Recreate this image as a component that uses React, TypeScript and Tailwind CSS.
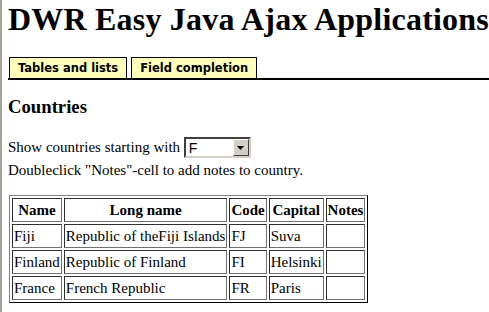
import React from "react";

const rows = [
  ["Fiji", "Republic of theFiji Islands", "FJ", "Suva"],
  ["Finland", "Republic of Finland", "FI", "Helsinki"],
  ["France", "French Republic", "FR", "Paris"],
];

const td = "border border-t-[#303030] border-l-[#303030] border-r-[#707070] border-b-[#707070] px-[1px] py-[1px] text-left font-normal";
const th = "border border-t-[#303030] border-l-[#303030] border-r-[#707070] border-b-[#707070] px-[1px] py-[1px] text-center font-bold";

export default function App() {
  return (
    <div className="flex min-h-[312px] w-[489px] bg-white text-black" style={{ fontFamily: '"Liberation Serif", serif' }}>
      <div className="w-[2px] shrink-0 bg-[#a8a49c]" />
      <div className="flex-1 pl-[6px]">
        <h1 className="mt-[1px] text-[32px] font-bold leading-[37px] tracking-[0.2px] whitespace-nowrap">DWR Easy Java Ajax Applications</h1>
        <div className="mt-[19px] flex gap-[4px] border-b-2 border-black pl-[1px]">
          <div className="border border-black border-b-0 bg-[#ffffbb] px-[8px] pt-[2px] pb-[2px] text-[11.5px] font-bold leading-[16px]" style={{ fontFamily: '"DejaVu Sans", Verdana, sans-serif' }}>Tables and lists</div>
          <div className="border border-black border-b-0 bg-[#ffffbb] px-[8px] pt-[2px] pb-[2px] text-[11.5px] font-bold leading-[16px]" style={{ fontFamily: '"DejaVu Sans", Verdana, sans-serif' }}>Field completion</div>
        </div>
        <h3 className="mt-[16px] text-[18.7px] font-bold leading-[22px]">Countries</h3>
        <div className="mt-[19px] flex items-center text-[15px] leading-[19px]">
          <span>Show countries starting with&nbsp;</span>
          <div className="flex h-[21px] w-[67px] items-center border-2 border-t-[#404040] border-l-[#404040] border-r-[#d4d0c8] border-b-[#d4d0c8] bg-white">
            <span className="flex-1 pl-[3px] text-[14px] leading-[16px]" style={{ fontFamily: '"Liberation Sans", Arial, sans-serif' }}>F</span>
            <div className="flex h-[17px] w-[16px] items-center justify-center border border-t-white border-l-white border-r-[#404040] border-b-[#404040] bg-[#d4d0c8]">
              <svg width="7" height="4" viewBox="0 0 7 4"><path d="M0 0h7L3.5 4z" fill="black" /></svg>
            </div>
          </div>
        </div>
        <div className="mt-[3px] text-[15px] leading-[19px]">Doubleclick "Notes"-cell to add notes to country.</div>
        <table className="mt-[15px] ml-[1px] border-separate border-spacing-[2px] border border-t-[#808080] border-l-[#808080] border-r-black border-b-black text-[15px] leading-[20px]">
          <thead>
            <tr>
              <th className={th}>Name</th>
              <th className={th}>Long name</th>
              <th className={th}>Code</th>
              <th className={th}>Capital</th>
              <th className={th}>Notes</th>
            </tr>
          </thead>
          <tbody>
            {rows.map((r) => (
              <tr key={r[0]}>
                {r.map((c, i) => (
                  <td key={i} className={td}>{c}</td>
                ))}
                <td className={td}></td>
              </tr>
            ))}
          </tbody>
        </table>
      </div>
    </div>
  );
}
